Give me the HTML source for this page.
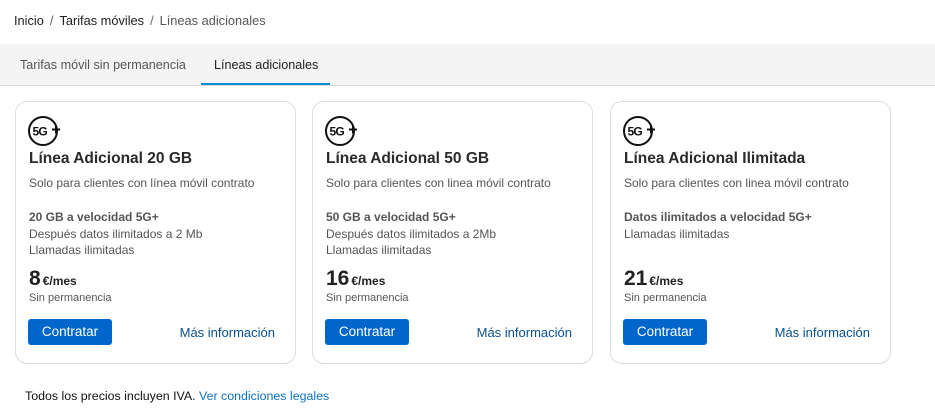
<!DOCTYPE html>
<html><head><meta charset="utf-8"><style>
*{margin:0;padding:0;box-sizing:border-box}
body{width:935px;height:416px;background:#fff;font-family:"Liberation Sans",sans-serif;color:#222;position:relative;overflow:hidden}
.bc{position:absolute;left:14px;top:13px;font-size:12.8px;color:#222}
.bc .s{color:#666;margin:0 6px}.bc .c{color:#555}
.band{position:absolute;left:0;top:44px;width:935px;height:42px;background:#f4f4f4;border-bottom:1px solid #ddd}
.tab{position:absolute;top:14px;font-size:12.6px}
.t1{left:20px;color:#555}
.t2{left:214px;color:#222}
.ul{position:absolute;left:201px;top:39px;width:129px;height:2px;background:#0b8ad6}
.card{position:absolute;top:101px;width:281px;height:263px;border:1px solid #ddd;border-radius:12px;background:#fff}
.ic{position:absolute;left:12px;top:13px}
.h{position:absolute;left:13px;top:48px;font-size:15.5px;font-weight:bold;color:#2a2a2a}
.sub{position:absolute;left:13px;top:74px;font-size:12px;color:#555}
.f{position:absolute;left:13px;top:107px;font-size:12px;line-height:16.5px;color:#555}
.f b{color:#555}
.p{position:absolute;left:13px;top:165px;font-size:21px;font-weight:bold;color:#222}
.p small{font-size:12px;margin-left:2px}
.sp{position:absolute;left:13px;top:190px;font-size:11px;color:#555}
.btn{position:absolute;left:12px;top:217px;width:84px;height:26px;background:#0066cc;border-radius:3px;color:#fff;font-size:13.5px;text-align:center;line-height:26px}
.more{position:absolute;right:20px;top:223px;font-size:13px;color:#0a4f8c}
.ft{position:absolute;left:25px;top:389px;font-size:12.4px;color:#111}
.ft a{color:#0b72c4;text-decoration:none}
</style></head><body>
<div class="bc">Inicio<span class="s">/</span>Tarifas móviles<span class="s">/</span><span class="c">Líneas adicionales</span></div>
<div class="band"><div class="tab t1">Tarifas móvil sin permanencia</div><div class="tab t2">Líneas adicionales</div><div class="ul"></div></div>

<div class="card" style="left:15px">
<svg class="ic" width="36" height="34" viewBox="0 0 36 34"><circle cx="15" cy="16" r="14" fill="none" stroke="#111" stroke-width="2"/><text x="4.5" y="20.5" font-family="Liberation Sans" font-size="12" font-weight="bold" fill="#111" style="letter-spacing:-0.8px">5G</text><path d="M24 14.5h8M28 10.5v8" stroke="#111" stroke-width="2"/></svg>
<div class="h">Línea Adicional 20 GB</div>
<div class="sub">Solo para clientes con línea móvil contrato</div>
<div class="f"><b>20 GB a velocidad 5G+</b><br>Después datos ilimitados a 2 Mb<br>Llamadas ilimitadas</div>
<div class="p">8<small>€/mes</small></div>
<div class="sp">Sin permanencia</div>
<div class="btn">Contratar</div><div class="more">Más información</div>
</div>

<div class="card" style="left:312px">
<svg class="ic" width="36" height="34" viewBox="0 0 36 34"><circle cx="15" cy="16" r="14" fill="none" stroke="#111" stroke-width="2"/><text x="4.5" y="20.5" font-family="Liberation Sans" font-size="12" font-weight="bold" fill="#111" style="letter-spacing:-0.8px">5G</text><path d="M24 14.5h8M28 10.5v8" stroke="#111" stroke-width="2"/></svg>
<div class="h">Línea Adicional 50 GB</div>
<div class="sub">Solo para clientes con linea móvil contrato</div>
<div class="f"><b>50 GB a velocidad 5G+</b><br>Después datos ilimitados a 2Mb<br>Llamadas ilimitadas</div>
<div class="p">16<small>€/mes</small></div>
<div class="sp">Sin permanencia</div>
<div class="btn">Contratar</div><div class="more">Más información</div>
</div>

<div class="card" style="left:610px">
<svg class="ic" width="36" height="34" viewBox="0 0 36 34"><circle cx="15" cy="16" r="14" fill="none" stroke="#111" stroke-width="2"/><text x="4.5" y="20.5" font-family="Liberation Sans" font-size="12" font-weight="bold" fill="#111" style="letter-spacing:-0.8px">5G</text><path d="M24 14.5h8M28 10.5v8" stroke="#111" stroke-width="2"/></svg>
<div class="h">Línea Adicional Ilimitada</div>
<div class="sub">Solo para clientes con linea móvil contrato</div>
<div class="f"><b>Datos ilimitados a velocidad 5G+</b><br>Llamadas ilimitadas</div>
<div class="p">21<small>€/mes</small></div>
<div class="sp">Sin permanencia</div>
<div class="btn">Contratar</div><div class="more">Más información</div>
</div>

<div class="ft">Todos los precios incluyen IVA. <a>Ver condiciones legales</a></div>
</body></html>
